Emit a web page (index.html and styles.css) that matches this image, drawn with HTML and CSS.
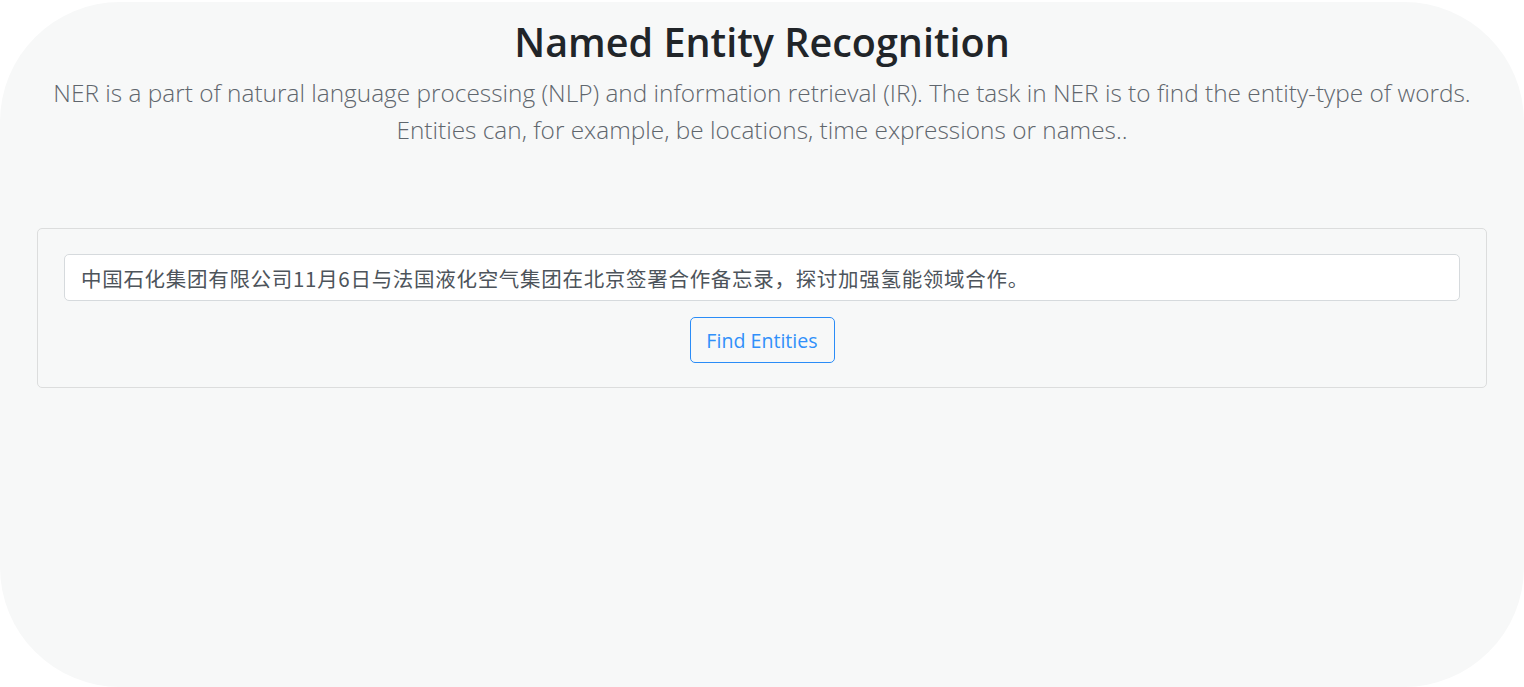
FILE: index.html
```html
<!DOCTYPE html>
<html lang="en">
<head>
<meta charset="utf-8">
<title>Named Entity Recognition</title>
<link rel="stylesheet" href="styles.css">
</head>
<body>
<div class="page">
  <header class="intro">
    <h1 class="title">Named Entity Recognition</h1>
    <p class="lead">NER is a part of natural language processing (NLP) and information retrieval (IR). The task in NER is to find the entity-type of words.<br>Entities can, for example, be locations, time expressions or names..</p>
  </header>
  <section class="card">
    <input class="text-input" type="text" value="中国石化集团有限公司11月6日与法国液化空气集团在北京签署合作备忘录，探讨加强氢能领域合作。">
    <button class="btn" type="button">Find Entities</button>
  </section>
</div>
</body>
</html>
```

FILE: styles.css
```css
html, body {
  margin: 0;
  padding: 0;
  background: #ffffff;
}

body {
  font-family: "Open Sans", "Noto Sans", "Noto Sans CJK SC", sans-serif;
}

.page {
  box-sizing: border-box;
  margin-top: 2px;
  height: 685px;
  background: #f7f8f8;
  border-radius: 120px;
  padding: 16px 37px 0 37px;
  display: flex;
  flex-direction: column;
  align-items: stretch;
}

.intro {
  display: flex;
  flex-direction: column;
  align-items: center;
  text-align: center;
  flex-shrink: 0;
}

.title {
  margin: 0;
  font-size: 39.5px;
  line-height: 48px;
  font-weight: 600;
  color: #212529;
}

.lead {
  margin: 8px 0 0 0;
  font-size: 24.4px;
  line-height: 37px;
  font-weight: 300;
  color: #5f666d;
  white-space: nowrap;
}

.card {
  margin-top: 80px;
  flex-shrink: 0;
  box-sizing: border-box;
  height: 160px;
  border: 1px solid #dcdddd;
  border-radius: 5px;
  padding: 25px 26px 25px 26px;
  display: flex;
  flex-direction: column;
  align-items: center;
  gap: 16px;
}

.text-input {
  box-sizing: border-box;
  flex-shrink: 0;
  width: 100%;
  height: 47px;
  border: 1px solid #d6dadd;
  border-radius: 5px;
  background: #ffffff;
  padding: 0 16px;
  font-family: "Noto Sans CJK SC", "Noto Sans", sans-serif;
  font-size: 20.5px;
  letter-spacing: 0.7px;
  color: #4d545b;
  outline: none;
}

.btn {
  box-sizing: border-box;
  flex-shrink: 0;
  width: 145px;
  height: 46px;
  border: 1.5px solid #2a8cf7;
  border-radius: 5px;
  background: transparent;
  color: #3090fa;
  font-family: "Open Sans", "Noto Sans", sans-serif;
  font-size: 19.6px;
  font-weight: 400;
  padding: 0;
  cursor: pointer;
}
```
